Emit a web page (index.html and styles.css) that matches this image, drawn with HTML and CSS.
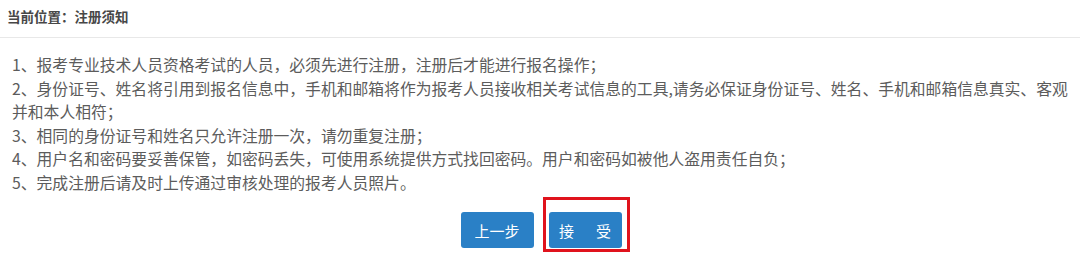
FILE: index.html
```html
<!DOCTYPE html>
<html lang="zh-CN">
<head>
<meta charset="utf-8">
<title>注册须知</title>
<link rel="stylesheet" href="styles.css">
</head>
<body>
<div class="page">
  <div class="crumb">当前位置：注册须知</div>
  <div class="notice">
    <p>1、报考专业技术人员资格考试的人员，必须先进行注册，注册后才能进行报名操作；</p>
    <p>2、身份证号、姓名将引用到报名信息中，手机和邮箱将作为报考人员接收相关考试信息的工具,请务必保证身份证号、姓名、手机和邮箱信息真实、客观并和本人相符；</p>
    <p>3、相同的身份证号和姓名只允许注册一次，请勿重复注册；</p>
    <p>4、用户名和密码要妥善保管，如密码丢失，可使用系统提供方式找回密码。用户和密码如被他人盗用责任自负；</p>
    <p>5、完成注册后请及时上传通过审核处理的报考人员照片。</p>
  </div>
  <div class="actions">
    <button class="btn" type="button">上一步</button>
    <div class="mark-wrap">
      <button class="btn btn-spaced" type="button"><span>接</span><span>受</span></button>
      <span class="mark"></span>
    </div>
  </div>
</div>
</body>
</html>
```

FILE: styles.css
```css
html, body {
  margin: 0;
  padding: 0;
  background: #ffffff;
}
body {
  font-family: "Noto Sans CJK SC", "Noto Sans", sans-serif;
  color: #5c5c5c;
}
.page {
  width: 1080px;
  height: 254px;
  overflow: hidden;
}
.crumb {
  height: 37px;
  line-height: 33px;
  padding-left: 7px;
  font-size: 13.5px;
  font-weight: bold;
  color: #474747;
  border-bottom: 1px solid #e8e8e8;
}
.notice {
  padding: 15px 4px 0 12px;
  font-size: 15.8px;
  line-height: 23.5px;
  color: #5c5c5c;
}
.notice p {
  margin: 0;
}
.actions {
  display: flex;
  justify-content: center;
  gap: 15px;
  margin-top: 18px;
  padding-left: 2px;
}
.btn {
  width: 73px;
  height: 36px;
  border: none;
  border-radius: 3px;
  background: #2a80c6;
  color: #ffffff;
  font-family: "Noto Sans CJK SC", sans-serif;
  font-size: 15px;
  padding: 0;
  cursor: pointer;
}
.btn-spaced {
  display: inline-flex;
  align-items: center;
  justify-content: center;
  gap: 22px;
}
.mark-wrap {
  position: relative;
}
.mark {
  position: absolute;
  left: -6px;
  right: -8px;
  top: -15px;
  bottom: -4px;
  border: 3px solid #e0131d;
  pointer-events: none;
}
```
